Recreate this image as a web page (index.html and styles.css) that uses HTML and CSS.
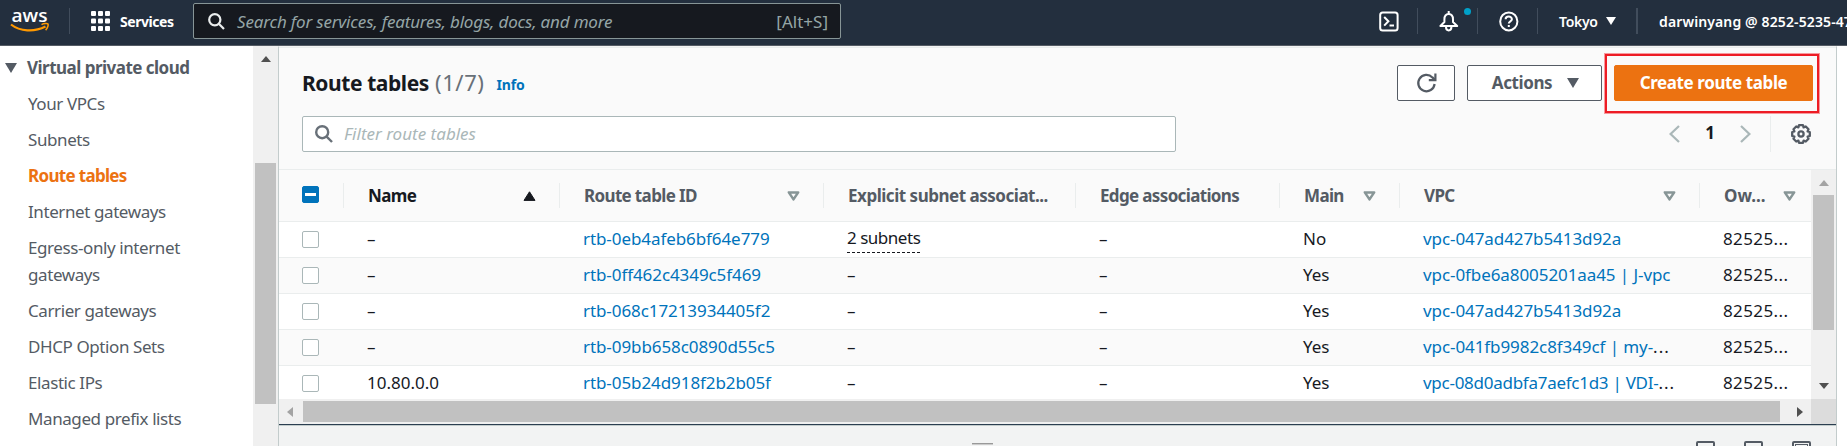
FILE: index.html
```html
<!DOCTYPE html>
<html lang="en">
<head>
  <meta charset="UTF-8">
  <title>Route tables | VPC Management Console</title>
  <link rel="stylesheet" href="styles.css">
</head>
<body>

  <!-- Top navigation -->
  <header class="topnav">
    <svg class="logo" width="40" height="26" viewBox="0 0 40 26">
      <text x="0.5" y="13.5" font-size="17.5" fill="#fff" textLength="36" lengthAdjust="spacingAndGlyphs">aws</text>
      <path d="M0 16.5 C9 23.5 23 24.5 34.5 18.5" fill="none" stroke="#ff9900" stroke-width="2.2"/>
      <path d="M30.5 16.6 C33 15.2 36.5 15.3 37 16 C37.6 17 36.5 20.5 34.6 22.2" fill="none" stroke="#ff9900" stroke-width="1.6"/>
    </svg>
    <span class="divider"></span>
    <div class="services">
      <svg width="19" height="20" viewBox="0 0 19 20" fill="#fff">
        <rect x="0" y="0" width="5" height="5" rx="1"/><rect x="7" y="0" width="5" height="5" rx="1"/><rect x="14" y="0" width="5" height="5" rx="1"/>
        <rect x="0" y="7.5" width="5" height="5" rx="1"/><rect x="7" y="7.5" width="5" height="5" rx="1"/><rect x="14" y="7.5" width="5" height="5" rx="1"/>
        <rect x="0" y="15" width="5" height="5" rx="1"/><rect x="7" y="15" width="5" height="5" rx="1"/><rect x="14" y="15" width="5" height="5" rx="1"/>
      </svg>
      <span>Services</span>
    </div>
    <div class="search">
      <svg width="17" height="17" viewBox="0 0 17 17" fill="none" stroke="#eaeded" stroke-width="2.2">
        <circle cx="6.8" cy="6.8" r="5.6"/><path d="M10.8 10.8 L16 16"/>
      </svg>
      <em>Search for services, features, blogs, docs, and more</em>
      <span class="shortcut">[Alt+S]</span>
    </div>
    <div class="tools">
      <svg width="20" height="21" viewBox="0 0 20 21" fill="none" stroke="#fff" stroke-width="2">
        <rect x="1.2" y="1.4" width="17.4" height="18" rx="2.5"/><path d="M5.2 6 L9.4 10.3 L5.2 14.6 M10.5 14.4 H15"/>
      </svg>
      <span class="divider"></span>
      <span class="bell">
        <svg width="20" height="21" viewBox="0 0 20 21" fill="none" stroke="#fff" stroke-width="2" stroke-linejoin="round">
          <path d="M9.7 0 V3 M1.4 15 L5.4 11 V8.5 C5.4 5 7 3 9.7 3 C12.4 3 14 5 14 8.5 V11 L18.2 15 Z"/>
          <path d="M7 16 C7 20.5 12.4 20.5 12.4 16"/>
        </svg>
        <span class="dot"></span>
      </span>
      <span class="divider"></span>
      <svg width="20" height="21" viewBox="0 0 20 21" fill="none" stroke="#fff" stroke-width="2">
        <ellipse cx="9.8" cy="10.4" rx="8.6" ry="9"/>
        <path d="M6.6 8.2 C6.6 4.6 12.9 4.6 12.9 8.2 C12.9 10.4 9.8 10.2 9.8 12.4 M9.8 14 V16"/>
      </svg>
      <span class="divider"></span>
      <span class="region">Tokyo <i class="caret"></i></span>
      <span class="divider thick"></span>
      <span class="account">darwinyang @ 8252-5235-47</span>
    </div>
  </header>

  <div class="layout">
    <!-- Side navigation -->
    <nav class="sidebar">
      <h2><i class="caret"></i>Virtual private cloud</h2>
      <ul>
        <li>Your VPCs</li>
        <li>Subnets</li>
        <li class="active">Route tables</li>
        <li>Internet gateways</li>
        <li>Egress-only internet gateways</li>
        <li>Carrier gateways</li>
        <li>DHCP Option Sets</li>
        <li>Elastic IPs</li>
        <li>Managed prefix lists</li>
      </ul>
    </nav>
    <div class="vscroll side-scroll"><i class="arrow-up dark"></i><span class="thumb"></span></div>

    <main class="panel">
      <div class="panel-head">
        <div class="title-row">
          <h1>Route tables <span class="count">(1/7)</span></h1>
          <a class="info">Info</a>
          <div class="buttons">
            <button class="btn refresh">
              <svg width="20" height="20" viewBox="0 0 20 20" fill="none" stroke="#545b64" stroke-width="2.2">
                <path d="M17.6 11 A8.2 8.2 0 1 1 15.4 4.4 L17.6 6.6"/><path d="M18.4 0.6 V7.2 H11.8"/>
              </svg>
            </button>
            <button class="btn actions">Actions <i class="caret"></i></button>
            <div class="marked"><button class="btn primary">Create route table</button></div>
          </div>
        </div>
        <div class="filter-row">
          <div class="filter">
            <svg width="18" height="18" viewBox="0 0 18 18" fill="none" stroke="#687078" stroke-width="2.4">
              <circle cx="7.2" cy="7.2" r="6"/><path d="M11.4 11.4 L17 17"/>
            </svg>
            <em>Filter route tables</em>
          </div>
          <div class="pager">
            <svg width="11" height="18" viewBox="0 0 11 18" fill="none" stroke="#aab7b8" stroke-width="2.2"><path d="M10 1 L1.6 9 L10 17"/></svg>
            <b>1</b>
            <svg width="11" height="18" viewBox="0 0 11 18" fill="none" stroke="#aab7b8" stroke-width="2.2"><path d="M1 1 L9.4 9 L1 17"/></svg>
            <span class="sep"></span>
            <svg width="20" height="20" viewBox="0 0 20 20" fill="none" stroke="#545b64" stroke-width="2.3">
              <path stroke-linejoin="round" d="M8 1.2 H12 L12.6 3.4 L14.8 2.5 L17.5 5.2 L16.6 7.4 L18.8 8 V12 L16.6 12.6 L17.5 14.8 L14.8 17.5 L12.6 16.6 L12 18.8 H8 L7.4 16.6 L5.2 17.5 L2.5 14.8 L3.4 12.6 L1.2 12 V8 L3.4 7.4 L2.5 5.2 L5.2 2.5 L7.4 3.4 Z"/>
              <circle cx="10" cy="10" r="2.6"/>
            </svg>
          </div>
        </div>
      </div>

      <div class="table-wrap">
        <div class="table-view">
          <table>
            <colgroup>
              <col class="c-check"><col class="c-name"><col class="c-id"><col class="c-subnet">
              <col class="c-edge"><col class="c-main"><col class="c-vpc"><col class="c-owner">
            </colgroup>
            <thead>
              <tr>
                <th><span class="check mixed"></span></th>
                <th class="sorted"><div>Name <svg class="sort" width="13" height="10" viewBox="0 0 13 10"><path d="M6.5 0.8 L12 9.4 H1 Z" fill="#16191f" stroke="#16191f" stroke-linejoin="round"/></svg></div></th>
                <th><div>Route table ID <svg class="sort" width="13" height="10" viewBox="0 0 13 10"><path d="M1.8 1.4 H11.2 L6.5 8.4 Z" fill="none" stroke="#879596" stroke-width="2.5" stroke-linejoin="round"/></svg></div></th>
                <th><div class="ls-subnet">Explicit subnet associat...</div></th>
                <th><div>Edge associations</div></th>
                <th><div>Main <svg class="sort" width="13" height="10" viewBox="0 0 13 10"><path d="M1.8 1.4 H11.2 L6.5 8.4 Z" fill="none" stroke="#879596" stroke-width="2.5" stroke-linejoin="round"/></svg></div></th>
                <th><div>VPC <svg class="sort" width="13" height="10" viewBox="0 0 13 10"><path d="M1.8 1.4 H11.2 L6.5 8.4 Z" fill="none" stroke="#879596" stroke-width="2.5" stroke-linejoin="round"/></svg></div></th>
                <th class="owner"><div>Ow... <svg class="sort" width="13" height="10" viewBox="0 0 13 10"><path d="M1.8 1.4 H11.2 L6.5 8.4 Z" fill="none" stroke="#879596" stroke-width="2.5" stroke-linejoin="round"/></svg></div></th>
              </tr>
            </thead>
            <tbody>
              <tr><td><span class="check"></span></td><td>–</td><td><a>rtb-0eb4afeb6bf64e779</a></td><td><span class="subnets">2 subnets</span></td><td>–</td><td>No</td><td><a>vpc-047ad427b5413d92a</a></td><td class="owner">82525...</td></tr>
              <tr><td><span class="check"></span></td><td>–</td><td><a>rtb-0ff462c4349c5f469</a></td><td>–</td><td>–</td><td>Yes</td><td><a>vpc-0fbe6a8005201aa45 | J-vpc</a></td><td class="owner">82525...</td></tr>
              <tr><td><span class="check"></span></td><td>–</td><td><a>rtb-068c17213934405f2</a></td><td>–</td><td>–</td><td>Yes</td><td><a>vpc-047ad427b5413d92a</a></td><td class="owner">82525...</td></tr>
              <tr><td><span class="check"></span></td><td>–</td><td><a>rtb-09bb658c0890d55c5</a></td><td>–</td><td>–</td><td>Yes</td><td><a>vpc-041fb9982c8f349cf | my-</a><span class="dots">...</span></td><td class="owner">82525...</td></tr>
              <tr><td><span class="check"></span></td><td>10.80.0.0</td><td><a>rtb-05b24d918f2b2b05f</a></td><td>–</td><td>–</td><td>Yes</td><td><a class="tight">vpc-08d0adbfa7aefc1d3 | VDI-</a><span class="dots">...</span></td><td class="owner">82525...</td></tr>
            </tbody>
          </table>
        </div>
        <div class="vscroll table-scroll"><i class="arrow-up"></i><span class="thumb"></span><i class="arrow-down"></i></div>
      </div>
      <div class="hscroll"><i class="arrow-left"></i><span class="thumb"></span><i class="arrow-right"></i><span class="corner"></span></div>

      <!-- Split panel -->
      <div class="split">
        <span class="handle"></span>
        <div class="split-icons"><span></span><span></span><span class="full"></span></div>
      </div>
    </main>
  </div>

</body>
</html>
```
FILE: styles.css
```css
* {
  box-sizing: border-box;
}

html, body {
  margin: 0;
  height: 446px;
  overflow: hidden;
}

body {
  font-family: "Noto Sans", sans-serif;
  font-size: 17px;
  color: #16191f;
  background: #fff;
}

svg {
  display: block;
  flex: none;
  overflow: visible;
}

.caret {
  display: inline-block;
  flex: none;
  border: 6px solid transparent;
  border-top: 10px solid #545b64;
  border-bottom: 0;
}

/* Top navigation */
.topnav {
  display: flex;
  align-items: center;
  height: 46px;
  padding: 0 0 3px 11px;
  background: #232f3e;
  border-bottom: 1px solid #545b64;
  color: #fff;
  font-size: 14px;
  font-weight: 600;
  white-space: nowrap;
  overflow: hidden;
}

.topnav > * {
  flex: none;
}

.logo {
  margin-right: 18px;
}

.logo text {
  font-family: "Open Sans", sans-serif;
  font-weight: 600;
}

.divider {
  flex: none;
  width: 1px;
  height: 26px;
  background: #414d5c;
}

.divider.thick {
  width: 2px;
}

.services {
  display: flex;
  align-items: center;
  gap: 10px;
  width: 123px;
  padding-left: 21px;
  font-weight: 700;
  letter-spacing: -0.45px;
}

.search {
  display: flex;
  align-items: center;
  width: 648px;
  height: 36px;
  padding: 0 12px 0 14px;
  background: #16191f;
  border: 1px solid #879596;
  border-radius: 2px;
  color: #95a5a6;
  font-size: 17px;
  font-weight: 400;
}

.search em {
  margin-left: 12px;
  letter-spacing: -0.18px;
}

.shortcut {
  margin-left: auto;
}

.tools {
  display: flex;
  align-items: center;
  margin-left: 538px;
}

.tools > svg, .bell {
  flex: none;
  margin-right: 18px;
}

.tools > .divider + svg, .bell {
  margin-left: 21px;
}

.bell {
  position: relative;
}

.dot {
  position: absolute;
  top: -3px;
  right: -12px;
  width: 7px;
  height: 7px;
  border-radius: 50%;
  background: #00a1c9;
}

.region {
  display: flex;
  align-items: center;
  gap: 8px;
  width: 98px;
  padding-left: 21px;
  letter-spacing: -0.3px;
}

.region .caret {
  border-width: 8px 5.5px 0;
  border-top-color: #fff;
}

.account {
  margin-left: 21px;
  letter-spacing: 0.12px;
}

.layout {
  display: flex;
  height: 400px;
}

/* Side navigation */
.sidebar {
  width: 253px;
  padding-top: 8px;
  color: #545b64;
}

.sidebar h2 {
  display: flex;
  align-items: center;
  gap: 10px;
  margin: 0 0 8px 5px;
  font-size: 17px;
  line-height: 27px;
  letter-spacing: -0.52px;
}

.sidebar ul {
  margin: 0;
  padding: 0 50px 0 28px;
  list-style: none;
  letter-spacing: -0.41px;
}

.sidebar li {
  line-height: 27px;
  margin-top: 9px;
}

.sidebar .active {
  color: #ec7211;
  font-weight: 700;
  letter-spacing: -0.68px;
}

/* Scrollbars */
.vscroll {
  display: flex;
  flex-direction: column;
  align-items: center;
  width: 25px;
  background: #f0f0f0;
}

.thumb {
  background: #c1c1c1;
}

.vscroll .thumb {
  width: 21px;
}

.arrow-up, .arrow-down {
  border: 5.5px solid transparent;
}

.arrow-up {
  border-top: 0;
  border-bottom: 6px solid #a3a3a3;
}

.arrow-up.dark {
  border-bottom-color: #505050;
}

.arrow-down {
  border-bottom: 0;
  border-top: 6px solid #505050;
}

.side-scroll {
  padding-top: 10px;
}

.side-scroll .thumb {
  height: 241px;
  margin-top: 101px;
}

.table-scroll {
  padding-top: 10px;
}

.table-scroll .thumb {
  height: 135px;
  margin: 9px 0 53px;
}

.hscroll {
  display: flex;
  align-items: center;
  height: 25px;
  padding-left: 8px;
  background: #f0f0f0;
}

.hscroll .thumb {
  width: 1477px;
  height: 21px;
  margin: 0 17px 0 10px;
}

.arrow-left, .arrow-right {
  border: 5.5px solid transparent;
}

.arrow-left {
  border-left: 0;
  border-right: 6px solid #a3a3a3;
}

.arrow-right {
  border-right: 0;
  border-left: 6px solid #505050;
}

.corner {
  width: 25px;
  height: 25px;
  margin-left: auto;
  background: #dcdcdc;
}

/* Main panel */
.panel {
  width: 1559px;
  border: 1px solid #c3cccc;
  border-top-color: #f2f3f3;
  border-bottom: 0;
  background: #fafafa;
}

.panel-head {
  height: 123px;
  padding: 5px 16px 0 23px;
  border-top: 1px solid #eaeded;
  border-bottom: 1px solid #eaeded;
}

.title-row {
  display: flex;
  align-items: flex-start;
}

.title-row h1 {
  margin: 15px 12px 0 0;
  font-size: 21px;
  line-height: 28px;
  letter-spacing: -0.42px;
}

.count {
  margin-left: 1px;
  color: #687078;
  font-size: 22px;
  font-weight: 400;
  letter-spacing: 0.6px;
}

.info {
  margin-top: 21px;
  color: #0073bb;
  font-size: 14px;
  font-weight: 700;
  line-height: 21px;
  letter-spacing: -0.2px;
}

.buttons {
  display: flex;
  align-items: flex-start;
  margin-left: auto;
}

.btn {
  display: flex;
  align-items: center;
  justify-content: center;
  height: 36px;
  padding: 0 0 2px;
  border: 1px solid #545b64;
  border-radius: 2px;
  background: #fff;
  color: #545b64;
  font-family: inherit;
  font-size: 17px;
  font-weight: 700;
  letter-spacing: -0.4px;
}

.refresh {
  width: 58px;
  margin: 12px 12px 0 0;
  padding: 0 0 0 1px;
}

.actions {
  width: 135px;
  gap: 15px;
  margin: 12px 2px 0 0;
  padding-left: 2px;
}

.actions .caret {
  margin-top: 2px;
}

/* red frame round the create button */
.marked {
  width: 216px;
  height: 61px;
  padding: 9px 4px 0 7px;
  border: 3px solid #ed1c24;
  outline: 1px solid #f7999d;
  outline-offset: -1px;
}

.primary {
  width: 199px;
  border-color: #ec7211;
  background: #ec7211;
  color: #fff;
}

.filter-row {
  display: flex;
  margin-top: 2px;
}

.filter {
  display: flex;
  align-items: center;
  gap: 11px;
  width: 874px;
  height: 36px;
  padding: 0 0 0 12px;
  border: 1px solid #aab7b8;
  border-radius: 2px;
  background: #fff;
  color: #aab7b8;
}

.filter em {
  margin-top: -2px;
}

.pager {
  display: flex;
  align-items: center;
  margin-left: auto;
  padding-right: 9px;
}

.pager b {
  width: 60px;
  padding-bottom: 3px;
  text-align: center;
}

.sep {
  width: 1px;
  height: 36px;
  margin: 0 20px 0 19px;
  background: #eaeded;
}

/* Route table list */
.table-wrap {
  display: flex;
  height: 229px;
}

.table-view {
  width: 1533px;
  overflow: hidden;
}

table {
  width: 1533px;
  table-layout: fixed;
  border-collapse: separate;
  border-spacing: 0;
  white-space: nowrap;
}

.c-check { width: 64px; }
.c-name { width: 216px; }
.c-id { width: 264px; }
.c-subnet { width: 252px; }
.c-edge { width: 204px; }
.c-main { width: 120px; }
.c-vpc { width: 300px; }
.c-owner { width: 113px; }

th, td {
  padding: 0;
  border-bottom: 1px solid #eaeded;
  text-align: left;
}

th {
  height: 52px;
  color: #545b64;
  letter-spacing: -0.65px;
}

th.sorted {
  color: #16191f;
}

th > div {
  display: flex;
  align-items: center;
  height: 25px;
  padding: 0 23px 0 24px;
  border-left: 1px solid #eaeded;
}

th .ls-subnet {
  letter-spacing: -0.48px;
}

th.owner > div {
  padding-right: 16px;
  letter-spacing: 0;
}

.sort {
  margin-left: auto;
}

td {
  height: 36px;
  padding: 0 0 1px 24px;
  background: #fff;
  line-height: 24px;
}

tbody tr:nth-child(even) td {
  background: #fafafa;
}

td:first-child, th:first-child {
  padding-left: 23px;
}

a {
  color: #0073bb;
  letter-spacing: -0.08px;
}

a.tight {
  letter-spacing: -0.27px;
}

.dots {
  letter-spacing: 1px;
}

td.owner {
  letter-spacing: 0.4px;
}

.subnets {
  display: inline-block;
  height: 25px;
  margin-top: 3px;
  border-bottom: 1px dashed #16191f;
  line-height: 20px;
  letter-spacing: -0.48px;
}

.check {
  display: block;
  width: 17px;
  height: 17px;
  border: 1px solid #aab7b8;
  border-radius: 2px;
  background: #fff;
}

.mixed {
  display: flex;
  align-items: center;
  justify-content: center;
  margin-top: -3px;
  border-color: #0073bb;
  background: #0073bb;
}

.mixed::before {
  content: "";
  width: 11px;
  height: 3px;
  background: #fff;
}

/* Split panel */
.split {
  position: relative;
  height: 22px;
  border-top: 1px solid #2b3e50;
  background: #f2f3f3;
  box-shadow: inset 0 1px #c3cccc;
  overflow: hidden;
}

.handle {
  position: absolute;
  top: 18px;
  left: 693px;
  width: 21px;
  height: 2px;
  border-top: 1px solid #999;
  background: #ccc;
}

.split-icons {
  display: flex;
  justify-content: flex-end;
  gap: 29px;
  padding: 16px 25px 0 0;
}

.split-icons span {
  width: 19px;
  height: 18px;
  border: 2px solid #545b64;
  border-radius: 2px;
}

.split-icons .full {
  box-shadow: inset 0 0 0 1px #f2f3f3, inset 0 0 0 2px #545b64;
}
```
